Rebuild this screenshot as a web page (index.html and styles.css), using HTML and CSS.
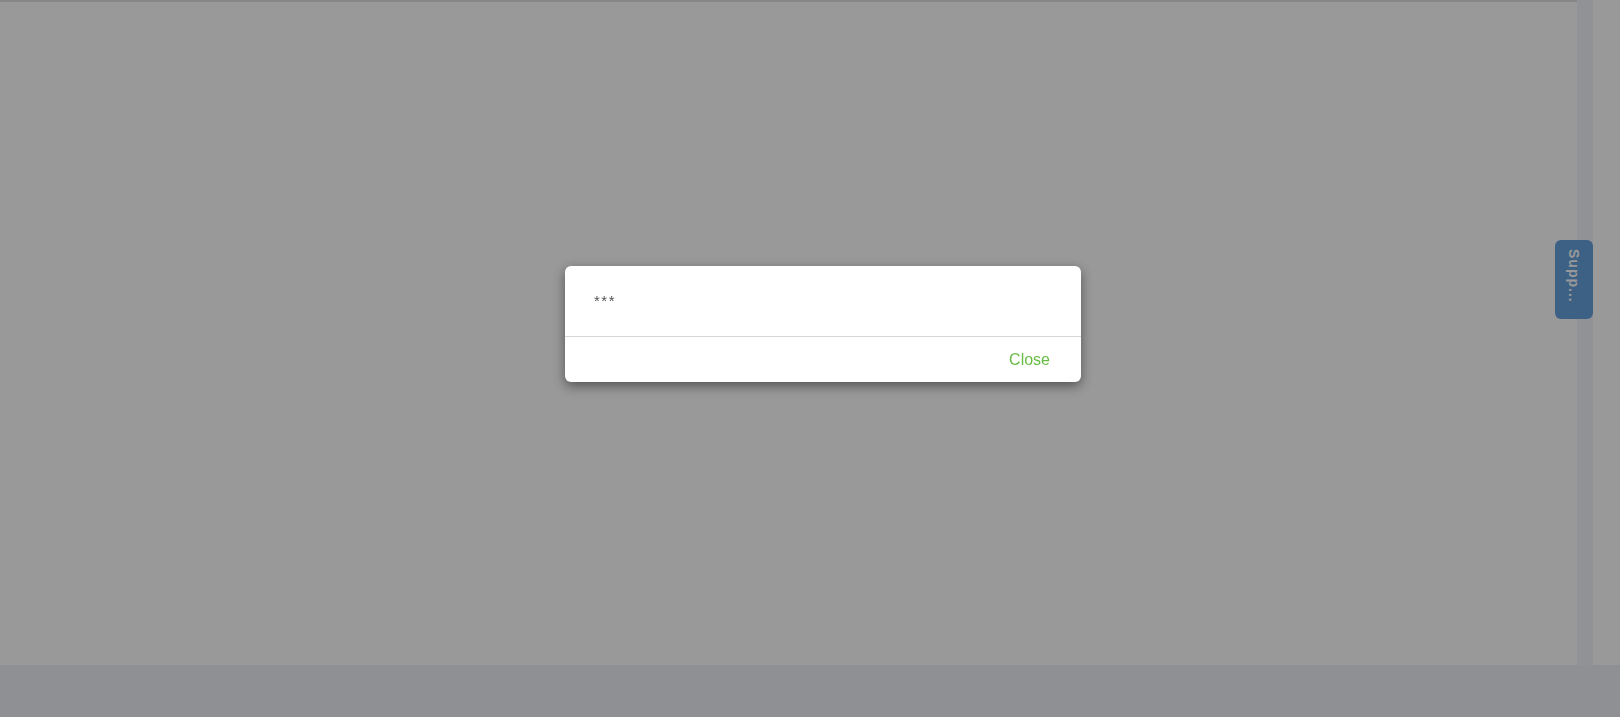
FILE: index.html
```html
<!DOCTYPE html>
<html lang="en">
<head>
    <meta charset="UTF-8">
    <meta name="viewport" content="width=device-width, initial-scale=1.0">
    <title>Message</title>
    <link rel="stylesheet" href="styles.css">
</head>
<body>
    <div class="app">
        <div class="main">
            <div class="panel"></div>
            <div class="scrollbar"></div>
            <div class="side"></div>
        </div>
        <div class="footer"></div>
    </div>

    <div class="support">Supp...</div>

    <div class="overlay"></div>

    <div class="modal">
        <div class="modal-body">***</div>
        <div class="modal-footer">
            <button class="btn-close">Close</button>
        </div>
    </div>
</body>
</html>
```

FILE: styles.css
```css
body {
    margin: 0;
    font-family: "Liberation Sans", Arial, sans-serif;
    background: #ffffff;
    overflow: hidden;
}
.app {
    display: flex;
    flex-direction: column;
    height: 717px;
}
.main {
    display: flex;
    height: 665px;
}
.panel {
    width: 1577px;
    background: #ffffff;
    border-top: 2px solid #e2e2e2;
    box-shadow: 0 1px 2px rgba(0, 0, 0, 0.15);
    box-sizing: border-box;
}
.scrollbar {
    width: 16px;
    background: #f1f3f8;
}
.side {
    flex: 1;
    background: #ffffff;
}
.footer {
    flex: 1;
    background: #eef0f5;
}
.support {
    position: fixed;
    left: 1555px;
    top: 240px;
    width: 38px;
    height: 79px;
    box-sizing: border-box;
    padding-top: 9px;
    background: #66a2de;
    border-radius: 6px;
    color: #ffffff;
    font-weight: bold;
    font-size: 14px;
    letter-spacing: 1px;
    writing-mode: vertical-rl;
    display: flex;
    align-items: center;
}
.overlay {
    position: fixed;
    inset: 0;
    background: rgba(0, 0, 0, 0.4);
}
.modal {
    position: fixed;
    left: 565px;
    top: 266px;
    width: 516px;
    background: #fff;
    border-radius: 6px;
    box-shadow: 0 4px 12px rgba(0, 0, 0, 0.45);
}
.modal-body {
    padding: 26px 29px;
    font-size: 15px;
    line-height: 18px;
    letter-spacing: 1.5px;
    color: #555;
}
.modal-footer {
    border-top: 1px solid #d6d6d6;
    padding: 12px 31px 12px;
    display: flex;
    justify-content: flex-end;
}
.btn-close {
    border: none;
    background: none;
    padding: 0;
    font-family: inherit;
    font-size: 16px;
    line-height: 21px;
    color: #67bd43;
    cursor: pointer;
}
```
